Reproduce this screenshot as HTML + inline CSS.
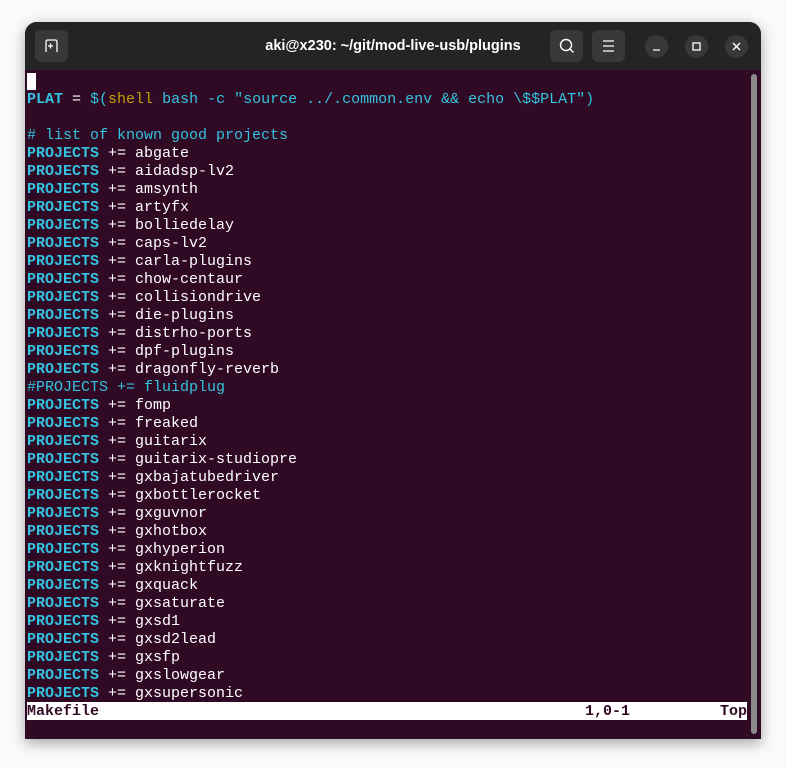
<!DOCTYPE html>
<html><head><style>
body{margin:0;width:786px;height:767px;background:#fafafa;position:relative;overflow:hidden;font-family:"Liberation Sans",sans-serif}
.win{position:absolute;left:25px;top:22px;width:736px;height:717px;border-radius:12px 12px 0 0;background:#300a24;box-shadow:0 4px 14px rgba(0,0,0,.35);overflow:hidden}
.tb{position:absolute;left:0;top:0;width:736px;height:48px;background:#242424}
.title{position:absolute;left:0;right:0;top:16px;text-align:center;color:#fff;font-weight:bold;font-size:14.5px}
.btn{position:absolute;top:8px;width:33px;height:32px;border-radius:6px;background:#383838}
.cb{position:absolute;top:13px;width:23px;height:23px;border-radius:50%;background:#383838}
.term{position:absolute;left:2px;top:51px;font-family:"Liberation Mono",monospace;font-size:15px;line-height:18px;color:#fff;white-space:pre}
.k{color:#34c3e0;font-weight:bold}.c{color:#34c3e0}.y{color:#c4a000}
.status{position:absolute;left:2px;top:680px;width:720px;height:18px;background:#fff;color:#300a24;font-family:"Liberation Mono",monospace;font-size:15px;line-height:18px;font-weight:bold;white-space:pre}
.status span{position:absolute;top:1px}
.sb{position:absolute;left:726px;top:52px;width:6px;height:660px;border-radius:3px;background:#8a8a8a}
</style></head><body>
<div class="win">
<div class="tb">
<div class="btn" style="left:10px"><svg width="33" height="32"><path d="M11 22V12q0-2 2-2h7q2 0 2 2v10M13 16h5M15.5 13.5v5" stroke="#fff" stroke-width="1.3" fill="none"/></svg></div>
<div class="title">aki@x230: ~/git/mod-live-usb/plugins</div>
<div class="btn" style="left:525px"><svg width="33" height="32"><circle cx="16" cy="15" r="5.5" stroke="#fff" stroke-width="1.4" fill="none"/><path d="M20 19l3.5 3.5" stroke="#fff" stroke-width="1.4"/></svg></div>
<div class="btn" style="left:567px"><svg width="33" height="32"><path d="M11 11h11M11 16h11M11 21h11" stroke="#fff" stroke-width="1.3"/></svg></div>
<div class="cb" style="left:620px"><svg width="23" height="23"><path d="M8 15h7" stroke="#fff" stroke-width="1.3"/></svg></div>
<div class="cb" style="left:660px"><svg width="23" height="23"><rect x="8" y="8" width="7" height="7" stroke="#fff" stroke-width="1.3" fill="none"/></svg></div>
<div class="cb" style="left:700px"><svg width="23" height="23"><path d="M8 8l7 7M15 8l-7 7" stroke="#fff" stroke-width="1.4"/></svg></div>
</div>
<div class="term"><span style="background:#fff"> </span>
<span class="k">PLAT</span> = <span class="c">$(</span><span class="y">shell</span> <span class="c">bash -c "source ../.common.env &amp;&amp; echo \$$PLAT")</span>

<span class="c"># list of known good projects</span>
<span class="k">PROJECTS</span> += abgate
<span class="k">PROJECTS</span> += aidadsp-lv2
<span class="k">PROJECTS</span> += amsynth
<span class="k">PROJECTS</span> += artyfx
<span class="k">PROJECTS</span> += bolliedelay
<span class="k">PROJECTS</span> += caps-lv2
<span class="k">PROJECTS</span> += carla-plugins
<span class="k">PROJECTS</span> += chow-centaur
<span class="k">PROJECTS</span> += collisiondrive
<span class="k">PROJECTS</span> += die-plugins
<span class="k">PROJECTS</span> += distrho-ports
<span class="k">PROJECTS</span> += dpf-plugins
<span class="k">PROJECTS</span> += dragonfly-reverb
<span class="c">#PROJECTS += fluidplug</span>
<span class="k">PROJECTS</span> += fomp
<span class="k">PROJECTS</span> += freaked
<span class="k">PROJECTS</span> += guitarix
<span class="k">PROJECTS</span> += guitarix-studiopre
<span class="k">PROJECTS</span> += gxbajatubedriver
<span class="k">PROJECTS</span> += gxbottlerocket
<span class="k">PROJECTS</span> += gxguvnor
<span class="k">PROJECTS</span> += gxhotbox
<span class="k">PROJECTS</span> += gxhyperion
<span class="k">PROJECTS</span> += gxknightfuzz
<span class="k">PROJECTS</span> += gxquack
<span class="k">PROJECTS</span> += gxsaturate
<span class="k">PROJECTS</span> += gxsd1
<span class="k">PROJECTS</span> += gxsd2lead
<span class="k">PROJECTS</span> += gxsfp
<span class="k">PROJECTS</span> += gxslowgear
<span class="k">PROJECTS</span> += gxsupersonic</div>
<div class="status"><span style="left:0">Makefile</span><span style="left:558px">1,0-1</span><span style="left:693px">Top</span></div>
<div class="sb"></div>
</div>
</body></html>
